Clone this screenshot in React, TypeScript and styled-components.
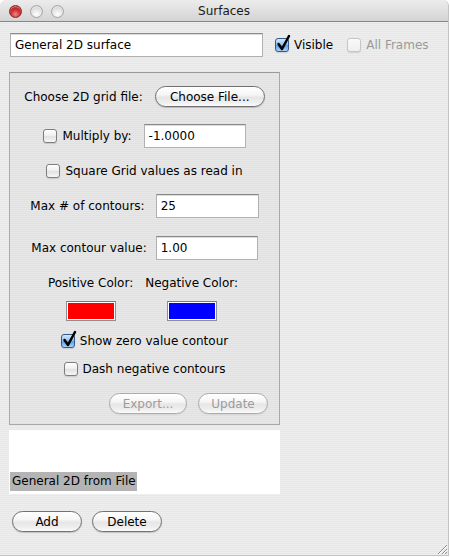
import React from 'react';
import styled, { createGlobalStyle } from 'styled-components';

const Global = createGlobalStyle`
  html, body { margin: 0; padding: 0; background: #ffffff; }
  body { font-family: "DejaVu Sans", Verdana, sans-serif; font-size: 12px; color: #000; }
  * { box-sizing: border-box; }
`;

const Window = styled.div`
  width: 449px;
  height: 556px;
  display: flex;
  flex-direction: column;
  position: relative;
  border-radius: 6px 6px 0 0;
  overflow: hidden;
  border-right: 1px solid #c4c4c4;
  border-bottom: 1px solid #c4c4c4;
  background: repeating-linear-gradient(to bottom, #eeeeee 0px, #eeeeee 1px, #e7e7e7 1px, #e7e7e7 2px);
`;

const TitleBar = styled.div`
  height: 22px;
  flex: none;
  display: grid;
  grid-template-columns: 1fr auto 1fr;
  align-items: center;
  background: linear-gradient(#ececec, #d4d4d4);
  border-bottom: 1px solid #878787;
`;

const Lights = styled.div`
  display: flex;
  gap: 8px;
  padding-left: 9px;
  padding-top: 1px;
`;

const Light = styled.span<{ $red?: boolean }>`
  width: 13px;
  height: 13px;
  border-radius: 50%;
  border: 1px solid ${p => (p.$red ? '#8a2222' : '#a4a4a4')};
  background: ${p =>
    p.$red
      ? 'radial-gradient(circle at 50% 75%, #f08a8a 0%, #d03030 45%, #9a1414 100%)'
      : 'radial-gradient(circle at 50% 75%, #ffffff 0%, #e4e4e4 50%, #c2c2c2 100%)'};
  box-shadow: inset 0 1px 1px rgba(255, 255, 255, 0.5);
`;

const Title = styled.div`
  font-size: 12px;
  color: #1a1a1a;
`;

const Content = styled.div`
  display: flex;
  flex-direction: column;
  flex: 1;
`;

const TopRow = styled.div`
  display: flex;
  align-items: center;
  margin-top: 11px;
  padding-left: 10px;
`;

const TextField = styled.div<{ $w: number; $ml?: number }>`
  width: ${p => p.$w}px;
  height: 24px;
  margin-left: ${p => p.$ml ?? 0}px;
  background: #fff;
  border: 1px solid #b1b1b1;
  border-top-color: #8a8a8a;
  box-shadow: inset 0 1px 0 #dcdcdc;
  display: flex;
  align-items: center;
  padding-left: 4px;
  font-size: 12px;
  flex: none;
`;

const CheckLabel = styled.label<{ $ml?: number; $disabled?: boolean }>`
  display: flex;
  align-items: center;
  gap: 5px;
  margin-left: ${p => p.$ml ?? 0}px;
  color: ${p => (p.$disabled ? '#9a9a9a' : '#000')};
  white-space: nowrap;
`;

const Box = styled.span<{ $checked?: boolean; $disabled?: boolean }>`
  width: 14px;
  height: 14px;
  flex: none;
  position: relative;
  border-radius: 3px;
  border: 1px solid ${p => (p.$disabled ? '#c6c6c6' : p.$checked ? '#35598a' : '#7e7e7e')};
  background: ${p =>
    p.$checked
      ? 'linear-gradient(#d6e9fc 0%, #94c2f2 45%, #5c9fe8 55%, #a9d3fb 100%)'
      : p.$disabled
      ? 'linear-gradient(#fafafa, #efefef)'
      : 'linear-gradient(#ffffff 0%, #f0f0f0 45%, #e1e1e1 55%, #f7f7f7 100%)'};
  box-shadow: 0 1px 1px rgba(0, 0, 0, 0.12);
`;

const CheckMark = styled.svg`
  position: absolute;
  left: 1px;
  top: -4px;
  width: 13px;
  height: 16px;
  overflow: visible;
`;

const Check = ({ checked, disabled }: { checked?: boolean; disabled?: boolean }) => (
  <Box $checked={checked} $disabled={disabled}>
    {checked && (
      <CheckMark viewBox="0 0 13 16">
        <path d="M1.5 9 L5 14 L12 1" fill="none" stroke="#000" strokeWidth="2.5" strokeLinecap="round" strokeLinejoin="round" />
      </CheckMark>
    )}
  </Box>
);

const Group = styled.div`
  margin-left: 9px;
  margin-top: 15px;
  width: 271px;
  height: 353px;
  flex: none;
  border: 1px solid #a9a9a9;
  border-top-color: #9a9a9a;
  background: rgba(0, 0, 0, 0.025);
  display: flex;
  flex-direction: column;
  align-items: center;
`;

const Row = styled.div<{ $mt: number; $h: number; $gap?: number }>`
  display: flex;
  align-items: center;
  margin-top: ${p => p.$mt}px;
  height: ${p => p.$h}px;
  gap: ${p => p.$gap ?? 0}px;
  white-space: nowrap;
`;

const ButtonRow = styled.div`
  display: flex;
  align-self: stretch;
  justify-content: flex-end;
  gap: 11px;
  margin-top: 16px;
  padding-right: 11px;
`;

const ColorGrid = styled.div`
  display: grid;
  grid-template-columns: auto auto;
  column-gap: 12px;
  row-gap: 10px;
  justify-items: center;
  margin-top: 15px;
  margin-right: 3px;
`;

const ColorLabel = styled.div`
  height: 16px;
  line-height: 16px;
`;

const Swatch = styled.div<{ $c: string }>`
  width: 50px;
  height: 20px;
  border: 1px solid #8f8f8f;
  border-top-color: #7a7a7a;
  padding: 1px;
  background: #fff;
  &::after {
    content: '';
    display: block;
    width: 100%;
    height: 100%;
    background: ${p => p.$c};
  }
`;

const AquaButton = styled.button<{ $w: number }>`
  width: ${p => p.$w}px;
  height: 21px;
  border-radius: 11px;
  border: 1px solid #707070;
  padding: 0;
  font-family: "DejaVu Sans", Verdana, sans-serif;
  font-size: 12px;
  color: #000;
  background: linear-gradient(#ffffff 0%, #f6f6f6 40%, #e6e6e6 55%, #eeeeee 80%, #fbfbfb 100%);
  box-shadow: 0 1px 1px rgba(0, 0, 0, 0.18);
  &:disabled {
    color: #9c9c9c;
    border-color: #acacac;
    box-shadow: 0 1px 1px rgba(0, 0, 0, 0.08);
  }
`;

const ListArea = styled.div`
  margin-left: 9px;
  margin-top: 5px;
  width: 271px;
  height: 64px;
  background: #fff;
  display: flex;
  flex-direction: column;
  justify-content: flex-end;
  align-items: flex-start;
  padding: 0 0 3px 1px;
`;

const ListItem = styled.div`
  background: #b4b4b4;
  height: 19px;
  line-height: 19px;
  padding: 0 1px 0 2px;
  font-size: 12px;
`;

const BottomRow = styled.div`
  display: flex;
  gap: 10px;
  margin-top: 17px;
  padding-left: 12px;
`;

const Grip = styled.svg`
  position: absolute;
  right: 0;
  bottom: 0;
  width: 13px;
  height: 13px;
`;

export default function App() {
  return (
    <>
      <Global />
      <Window>
        <TitleBar>
          <Lights>
            <Light $red />
            <Light />
            <Light />
          </Lights>
          <Title>Surfaces</Title>
          <div />
        </TitleBar>
        <Content>
          <TopRow>
            <TextField $w={253}>General 2D surface</TextField>
            <CheckLabel $ml={12}>
              <Check checked />
              Visible
            </CheckLabel>
            <CheckLabel $ml={14} $disabled>
              <Check disabled />
              All Frames
            </CheckLabel>
          </TopRow>

          <Group>
            <Row $mt={13} $h={21} $gap={12}>
              <span>Choose 2D grid file:</span>
              <AquaButton $w={110}>Choose File...</AquaButton>
            </Row>
            <Row $mt={17} $h={24} $gap={12}>
              <CheckLabel>
                <Check />
                Multiply by:
              </CheckLabel>
              <TextField $w={102}>-1.0000</TextField>
            </Row>
            <Row $mt={15} $h={16}>
              <CheckLabel>
                <Check />
                Square Grid values as read in
              </CheckLabel>
            </Row>
            <Row $mt={15} $h={24} $gap={11}>
              <span>Max # of contours:</span>
              <TextField $w={103}>25</TextField>
            </Row>
            <Row $mt={18} $h={24} $gap={9}>
              <span>Max contour value:</span>
              <TextField $w={102}>1.00</TextField>
            </Row>
            <ColorGrid>
              <ColorLabel>Positive Color:</ColorLabel>
              <ColorLabel>Negative Color:</ColorLabel>
              <Swatch $c="#ff0000" />
              <Swatch $c="#0000ff" />
            </ColorGrid>
            <Row $mt={12} $h={16}>
              <CheckLabel>
                <Check checked />
                Show zero value contour
              </CheckLabel>
            </Row>
            <Row $mt={12} $h={16}>
              <CheckLabel>
                <Check />
                Dash negative contours
              </CheckLabel>
            </Row>
            <ButtonRow>
              <AquaButton $w={78} disabled>Export...</AquaButton>
              <AquaButton $w={70} disabled>Update</AquaButton>
            </ButtonRow>
          </Group>

          <ListArea>
            <ListItem>General 2D from File</ListItem>
          </ListArea>

          <BottomRow>
            <AquaButton $w={70}>Add</AquaButton>
            <AquaButton $w={70}>Delete</AquaButton>
          </BottomRow>
        </Content>
        <Grip viewBox="0 0 13 13">
          <path d="M12 3 L3 12 M12 7 L7 12 M12 10 L10 12" stroke="#8a8a8a" strokeWidth="1" />
          <path d="M12 4 L4 12 M12 8 L8 12" stroke="#ffffff" strokeWidth="1" />
        </Grip>
      </Window>
    </>
  );
}
